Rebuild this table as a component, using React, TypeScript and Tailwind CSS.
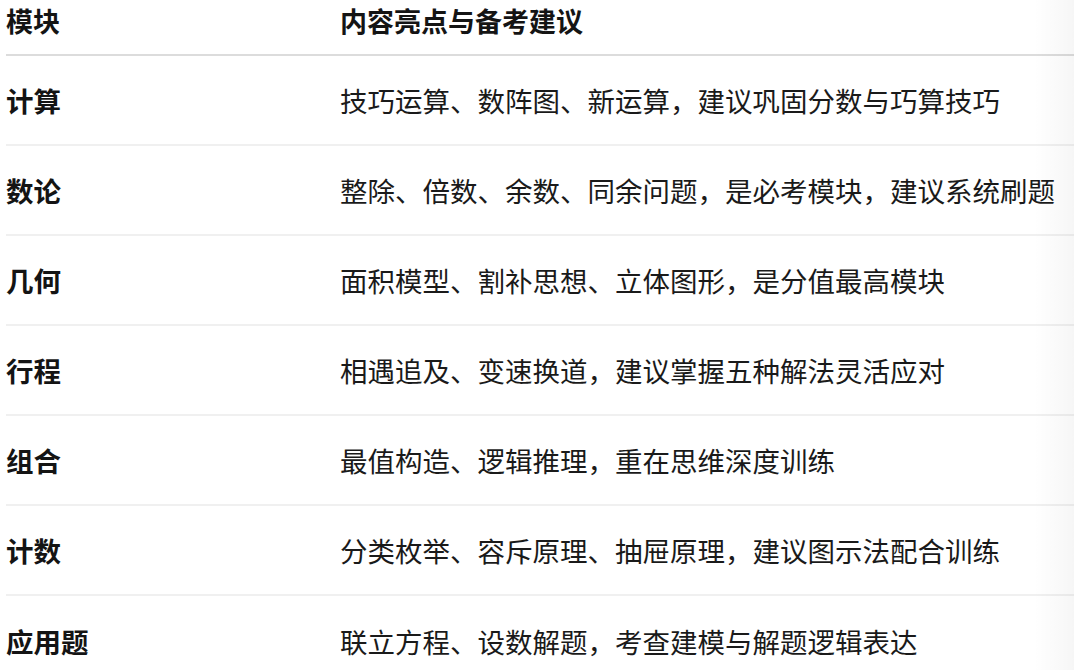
import React from "react";

const rows: [string, string][] = [
  ["计算", "技巧运算、数阵图、新运算，建议巩固分数与巧算技巧"],
  ["数论", "整除、倍数、余数、同余问题，是必考模块，建议系统刷题"],
  ["几何", "面积模型、割补思想、立体图形，是分值最高模块"],
  ["行程", "相遇追及、变速换道，建议掌握五种解法灵活应对"],
  ["组合", "最值构造、逻辑推理，重在思维深度训练"],
  ["计数", "分类枚举、容斥原理、抽屉原理，建议图示法配合训练"],
  ["应用题", "联立方程、设数解题，考查建模与解题逻辑表达"],
];

export default function App() {
  return (
    <div
      className="relative w-[1074px] h-[670px] overflow-hidden bg-white pl-[6px]"
      style={{ fontFamily: '"Noto Sans CJK SC", "Noto Sans", sans-serif' }}
    >
      <div className="flex h-[56px] items-start pt-[3px] border-b-2 border-[#dcdcdc] text-[27px] leading-[36px] font-bold text-[#141414]">
        <div className="w-[334px] shrink-0">模块</div>
        <div>内容亮点与备考建议</div>
      </div>
      {rows.map(([a, b], i) => (
        <div
          key={i}
          className={
            "flex h-[90px] items-center pb-[1px] text-[27.5px] leading-[36px] text-[#1a1a1a] " +
            (i < rows.length - 1 ? "border-b-2 border-[#f0f0f0]" : "")
          }
        >
          <div className="w-[334px] shrink-0 font-bold text-[#141414]">{a}</div>
          <div className="whitespace-nowrap">{b}</div>
        </div>
      ))}
      <div className="pointer-events-none absolute right-0 top-0 h-full w-[40px] bg-gradient-to-r from-transparent to-[rgba(0,0,0,0.035)]" />
    </div>
  );
}
